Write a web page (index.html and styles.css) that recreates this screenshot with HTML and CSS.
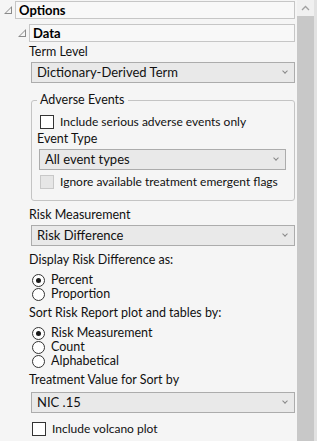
FILE: index.html
```html
<!DOCTYPE html>
<html lang="en">
<head>
    <meta charset="UTF-8">
    <title>Options</title>
    <link rel="stylesheet" href="styles.css">
</head>
<body>
<div class="window">
    <div class="content">
        <div class="outline">
            <span class="tri"></span>
            <div class="title">Options</div>
        </div>
        <div class="outline sub">
            <span class="tri"></span>
            <div class="title">Data</div>
        </div>
        <div class="body">
            <div class="label first">Term Level</div>
            <div class="combo">Dictionary-Derived Term<span class="chev"></span></div>

            <fieldset class="group">
                <legend>Adverse Events</legend>
                <div class="check first"><span class="box"></span>Include serious adverse events only</div>
                <div class="label">Event Type</div>
                <div class="combo">All event types<span class="chev"></span></div>
                <div class="check disabled"><span class="box"></span>Ignore available treatment emergent flags</div>
            </fieldset>

            <div class="label">Risk Measurement</div>
            <div class="combo">Risk Difference<span class="chev"></span></div>

            <div class="label">Display Risk Difference as:</div>
            <div class="radios">
                <div class="radio on"><span class="dot"></span>Percent</div>
                <div class="radio"><span class="dot"></span>Proportion</div>
            </div>

            <div class="label after-radios">Sort Risk Report plot and tables by:</div>
            <div class="radios">
                <div class="radio on"><span class="dot"></span>Risk Measurement</div>
                <div class="radio"><span class="dot"></span>Count</div>
                <div class="radio"><span class="dot"></span>Alphabetical</div>
            </div>

            <div class="label after-radios">Treatment Value for Sort by</div>
            <div class="combo sort">NIC .15<span class="chev"></span></div>

            <div class="check outer"><span class="box"></span>Include volcano plot</div>
        </div>
    </div>
    <div class="scrollbar">
        <div class="arrow">
            <svg width="9" height="6" viewBox="0 0 9 6"><path d="M1 5 L4.5 1.5 L8 5" fill="none" stroke="#a0a0a0" stroke-width="1.3"/></svg>
        </div>
        <div class="thumb"></div>
    </div>
    <div class="edge"></div>
</div>
</body>
</html>
```

FILE: styles.css
```css
body {
    margin: 0;
    font-family: Lato, "Noto Sans", sans-serif;
    font-size: 12px;
    color: #111;
    background-color: #f5f5f5;
}
.window {
    display: flex;
    height: 441px;
    overflow: hidden;
}
.content {
    flex: none;
    width: 292px;
    padding: 1px 2px 0 3px;
    overflow: hidden;
}
.outline {
    display: flex;
    align-items: center;
}
.outline .tri {
    width: 0;
    height: 0;
    border-left: 8px solid transparent;
    border-bottom: 8px solid #8a8a8a;
    margin: 0 3px 0 1px;
    position: relative;
}
.outline .tri::after {
    content: "";
    position: absolute;
    left: -6px;
    top: 2px;
    border-left: 5px solid transparent;
    border-bottom: 5px solid #f5f5f5;
}
.outline .title {
    flex: 1;
    height: 16px;
    line-height: 16px;
    border: 1px solid #c6c6c6;
    background-color: #f8f8f8;
    padding-left: 3px;
    font-weight: bold;
    font-size: 13px;
    color: #000;
}
.outline.sub {
    margin-top: 5px;
    padding-left: 14px;
}
.body {
    padding-left: 26px;
}
.label {
    margin-top: 7px;
    line-height: 14px;
    font-size: 12.5px;
    white-space: nowrap;
}
.label.first {
    margin-top: 3px;
}
.label.after-radios {
    margin-top: 5px;
}
.combo {
    position: relative;
    height: 19px;
    line-height: 19px;
    margin: 3px 0 0 2px;
    padding-left: 5px;
    border: 1px solid #acacac;
    background-color: #e9e9e9;
    font-size: 13px;
}
.combo.sort {
    margin-top: 5px;
}
.chev {
    position: absolute;
    right: 7px;
    top: 6px;
    width: 3px;
    height: 3px;
    border-right: 1px solid #888;
    border-bottom: 1px solid #888;
    transform: rotate(45deg);
}
.group {
    min-width: 0;
    margin: 10px 0 0 2px;
    padding: 0 8px 11px 5px;
    border: 1px solid #c4c4c4;
    border-radius: 3px;
}
.group legend {
    padding: 0 3px;
    margin-left: 0;
    line-height: 14px;
    font-size: 12.5px;
}
.group .label {
    margin-top: 3px;
}
.group .combo {
    margin-left: 2px;
}
.check {
    display: flex;
    align-items: center;
    margin-top: 5px;
    line-height: 14px;
    white-space: nowrap;
}
.check.first {
    margin-top: 8px;
}
.group .check {
    padding-left: 3px;
}
.check .box {
    flex: none;
    width: 12px;
    height: 12px;
    border: 1px solid #333;
    background-color: #fff;
    margin-right: 6px;
}
.check.disabled .box {
    border-color: #c8c8c8;
    background-color: #e6e6e6;
}
.check.outer {
    margin-top: 9px;
    padding-left: 3px;
}
.radios {
    margin-top: 6px;
    padding-left: 3px;
}
.radio {
    display: flex;
    align-items: center;
    height: 14px;
    line-height: 14px;
    font-size: 12.5px;
}
.radio .dot {
    position: relative;
    flex: none;
    width: 11px;
    height: 11px;
    border: 1px solid #333;
    border-radius: 50%;
    background-color: #fff;
    margin-right: 6px;
}
.radio.on .dot::after {
    content: "";
    position: absolute;
    left: 3px;
    top: 3px;
    width: 5px;
    height: 5px;
    border-radius: 50%;
    background-color: #1a1a1a;
}
.scrollbar {
    width: 17px;
    display: flex;
    flex-direction: column;
}
.arrow {
    height: 16px;
    display: flex;
    justify-content: center;
    align-items: center;
    background-color: #f0f0f0;
}
.thumb {
    flex: 1;
    background-color: #c8c8c8;
}
.edge {
    width: 3px;
    background-color: #e2e2e2;
}
```
